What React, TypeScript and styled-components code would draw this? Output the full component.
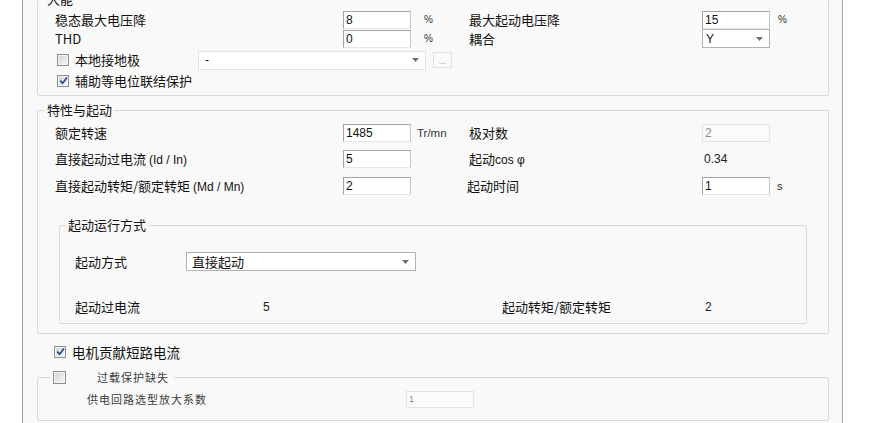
import styled, { createGlobalStyle } from 'styled-components';

const GlobalStyle = createGlobalStyle`
  html, body {
    margin: 0;
    padding: 0;
    background: #ffffff;
    overflow: hidden;
  }
  body {
    font-family: "Noto Sans CJK SC", "Liberation Sans", sans-serif;
    font-size: 13px;
    color: #111111;
  }
`;

const Panel = styled.div`
  margin-left: 22px;
  width: 792px;
  height: 423px;
  padding: 0 13px 0 14px;
  border-left: 1px solid #a3a3a3;
  border-right: 1px solid #a3a3a3;
  background: #f9f9f9;
  overflow: hidden;
`;

const Group = styled.fieldset<{ $mt: number; $pb: number; $mx?: number }>`
  margin: ${(p) => p.$mt}px ${(p) => p.$mx ?? 0}px 0;
  padding: 0 0 ${(p) => p.$pb}px;
  border: 1px solid #d9d9d9;
  border-radius: 2px;
  min-width: 0;
`;

const Legend = styled.legend<{ $ml: number }>`
  margin-left: ${(p) => p.$ml}px;
  padding: 0 2px;
  height: 18px;
  line-height: 18px;
  font-size: 13px;
  color: #111111;
`;

const LegendInner = styled.span`
  display: flex;
  align-items: center;
  height: 18px;
  padding-right: 3px;
`;

const FieldGrid = styled.div<{ $rows: string; $pt: number }>`
  display: grid;
  grid-template-columns: 288px 68px 58px 233px 68px 1fr;
  grid-template-rows: ${(p) => p.$rows};
  align-items: center;
  padding: ${(p) => p.$pt}px 0 0 17px;
`;

const Label = styled.span<{ $shift?: number }>`
  font-size: 13px;
  line-height: 16px;
  white-space: nowrap;
  margin-left: ${(p) => p.$shift ?? 0}px;
`;

const Latin = styled.span`
  font-family: "Liberation Sans", sans-serif;
  font-size: 12px;
`;

const Unit = styled.span<{ $pl: number; $size: number }>`
  padding-left: ${(p) => p.$pl}px;
  font-family: "Liberation Sans", sans-serif;
  font-size: ${(p) => p.$size}px;
  color: #333333;
`;

const Value = styled.span<{ $pl?: number }>`
  padding-left: ${(p) => p.$pl ?? 0}px;
  font-family: "Liberation Sans", sans-serif;
  font-size: 12px;
  color: #222222;
`;

const TextBox = styled.input<{ $small?: boolean }>`
  width: 68px;
  height: ${(p) => (p.$small ? 17 : 18)}px;
  box-sizing: border-box;
  margin: 0;
  padding: 0 0 0 2px;
  border: 1px solid;
  border-color: #a3a3a3 #c6c6c6 #e6e6e6 #a3a3a3;
  background: #ffffff;
  font-family: "Liberation Sans", sans-serif;
  font-size: ${(p) => (p.$small ? 9 : 12)}px;
  color: #111111;
  outline: none;
  &:disabled {
    background: #fbfbfb;
    border-color: #e3e3e3;
    color: #8c8c8c;
  }
`;

const Combo = styled.div<{ $w: number; $light?: boolean; $pl: number }>`
  width: ${(p) => p.$w}px;
  height: 19px;
  box-sizing: border-box;
  display: flex;
  align-items: center;
  justify-content: space-between;
  padding: 0 6px 0 ${(p) => p.$pl}px;
  border: 1px solid ${(p) => (p.$light ? '#e2e2e2' : '#b3b3b3')};
  background: #ffffff;
  font-size: 13px;
  color: #111111;
`;

const ComboText = styled.span<{ $latin?: boolean }>`
  font-family: ${(p) =>
    p.$latin ? '"Liberation Sans", sans-serif' : '"Noto Sans CJK SC", sans-serif'};
  font-size: ${(p) => (p.$latin ? 12 : 13)}px;
`;

const DotsButton = styled.div`
  width: 19px;
  height: 16px;
  box-sizing: border-box;
  margin-left: 7px;
  border: 1px solid #e0e0e0;
  background: #fafafa;
  color: #9a9a9a;
  font-family: "Liberation Sans", sans-serif;
  font-size: 9px;
  line-height: 16px;
  text-align: center;
`;

const Box = styled.span<{ $size?: number }>`
  width: ${(p) => p.$size ?? 12}px;
  height: ${(p) => p.$size ?? 12}px;
  box-sizing: border-box;
  flex-shrink: 0;
  display: inline-flex;
  align-items: center;
  justify-content: center;
  border: 1px solid #8f8f8f;
  box-shadow: inset 0 0 0 1px #f4f4f4;
  background: linear-gradient(135deg, #cfcfcf 0%, #e8e8e8 55%, #f6f6f6 100%);
`;

const CheckRow = styled.div<{ $h: number; $mt: number; $pl: number }>`
  display: flex;
  align-items: center;
  height: ${(p) => p.$h}px;
  margin-top: ${(p) => p.$mt}px;
  padding-left: ${(p) => p.$pl}px;
`;

const CheckLabel = styled.span<{ $w?: number; $size?: number }>`
  margin-left: 6px;
  width: ${(p) => (p.$w ? `${p.$w}px` : 'auto')};
  font-size: ${(p) => p.$size ?? 13}px;
  line-height: 16px;
  white-space: nowrap;
`;

const SubGrid = styled.div<{ $cols: string; $mt: number; $h: number }>`
  display: grid;
  grid-template-columns: ${(p) => p.$cols};
  align-items: center;
  height: ${(p) => p.$h}px;
  margin-top: ${(p) => p.$mt}px;
  padding-left: 15px;
`;

const Faint = styled.span<{ $ml?: number }>`
  margin-left: ${(p) => p.$ml ?? 0}px;
  font-size: 11px;
  letter-spacing: 1px;
  color: #3c3c3c;
  white-space: nowrap;
`;

const FaintRow = styled.div`
  display: grid;
  grid-template-columns: 319px 68px;
  align-items: center;
  height: 18px;
  padding: 4px 0 0 49px;
`;

const Arrow = () => (
  <svg width="7" height="4" viewBox="0 0 7 4">
    <path d="M0 0 H7 L3.5 4 Z" fill="#707070" />
  </svg>
);

const Check = ({ checked, size }: { checked?: boolean; size?: number }) => (
  <Box $size={size}>
    {checked && (
      <svg width="9" height="9" viewBox="0 0 9 9">
        <path d="M1.2 4.6 L3.6 7.2 L8 1.4" fill="none" stroke="#2a4790" strokeWidth="1.7" />
      </svg>
    )}
  </Box>
);

export default function App() {
  return (
    <>
      <GlobalStyle />
      <Panel>
        <Group $mt={-10} $pb={5}>
          <Legend $ml={7}>大能</Legend>
          <FieldGrid $rows="19px 19px" $pt={2}>
            <Label>稳态最大电压降</Label>
            <TextBox readOnly value="8" />
            <Unit $pl={13} $size={10}>%</Unit>
            <Label>最大起动电压降</Label>
            <TextBox readOnly value="15" />
            <Unit $pl={8} $size={10}>%</Unit>

            <Label>THD</Label>
            <TextBox readOnly value="0" />
            <Unit $pl={13} $size={10}>%</Unit>
            <Label>耦合</Label>
            <Combo $w={68} $pl={3}>
              <ComboText $latin>Y</ComboText>
              <Arrow />
            </Combo>
            <span />
          </FieldGrid>
          <CheckRow $h={20} $mt={2} $pl={19}>
            <Check />
            <CheckLabel $w={123}>本地接地极</CheckLabel>
            <Combo $w={228} $light $pl={6}>
              <ComboText $latin>-</ComboText>
              <Arrow />
            </Combo>
            <DotsButton>...</DotsButton>
          </CheckRow>
          <CheckRow $h={19} $mt={1} $pl={19}>
            <Check checked />
            <CheckLabel>辅助等电位联结保护</CheckLabel>
          </CheckRow>
        </Group>

        <Group $mt={5} $pb={9}>
          <Legend $ml={7}>特性与起动</Legend>
          <FieldGrid $rows="26px 26px 28px" $pt={1}>
            <Label>额定转速</Label>
            <TextBox readOnly value="1485" />
            <Unit $pl={6} $size={11.5}>Tr/mn</Unit>
            <Label>极对数</Label>
            <TextBox disabled value="2" />
            <span />

            <Label>
              直接起动过电流 <Latin>(Id / In)</Latin>
            </Label>
            <TextBox readOnly value="5" />
            <span />
            <Label>
              起动<Latin>cos φ</Latin>
            </Label>
            <Value $pl={2}>0.34</Value>
            <span />

            <Label>
              直接起动转矩/额定转矩 <Latin>(Md / Mn)</Latin>
            </Label>
            <TextBox readOnly value="2" />
            <span />
            <Label $shift={-2}>起动时间</Label>
            <TextBox readOnly value="1" />
            <Unit $pl={7} $size={11}>s</Unit>
          </FieldGrid>

          <Group $mt={16} $pb={6} $mx={21}>
            <Legend $ml={6}>起动运行方式</Legend>
            <SubGrid $cols="111px 230px" $mt={17} $h={21}>
              <Label>起动方式</Label>
              <Combo $w={230} $pl={5}>
                <ComboText>直接起动</ComboText>
                <Arrow />
              </Combo>
            </SubGrid>
            <SubGrid $cols="188px 239px 203px 1fr" $mt={25} $h={20}>
              <Label>起动过电流</Label>
              <Value>5</Value>
              <Label>起动转矩/额定转矩</Label>
              <Value>2</Value>
            </SubGrid>
          </Group>
        </Group>

        <CheckRow $h={19} $mt={8} $pl={17}>
          <Check checked />
          <CheckLabel $size={13.5}>电机贡献短路电流</CheckLabel>
        </CheckRow>

        <Group $mt={7} $pb={12}>
          <Legend $ml={13}>
            <LegendInner>
              <Check size={13} />
              <Faint $ml={31}>过载保护缺失</Faint>
            </LegendInner>
          </Legend>
          <FaintRow>
            <Faint>供电回路选型放大系数</Faint>
            <TextBox disabled $small value="1" />
          </FaintRow>
        </Group>
      </Panel>
    </>
  );
}
